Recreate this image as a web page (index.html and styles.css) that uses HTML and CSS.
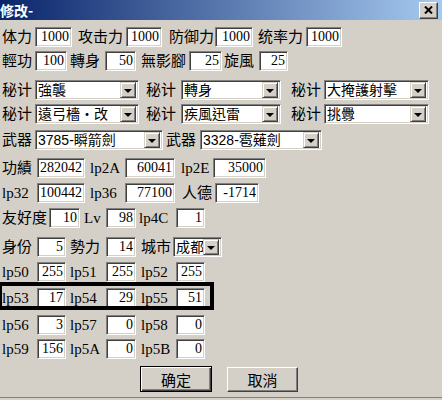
FILE: index.html
```html
<!DOCTYPE html>
<html lang="zh-Hant">
<head>
<meta charset="utf-8">
<title>修改</title>
<link rel="stylesheet" href="styles.css">
</head>
<body>
<div class="dialog">
  <div class="titlebar">
    <span class="title">修改-</span>
    <span class="close"><svg width="9" height="8" viewBox="0 0 9 8"><path d="M1 0.5 L8 7.5 M8 0.5 L1 7.5" stroke="#000" stroke-width="2"/></svg></span>
  </div>
  <div class="content">
    <div class="row">
      <span class="lab m2 w33">体力</span><input class="field i37" value="1000" readonly>
      <span class="lab m6 w48">攻击力</span><input class="field i36" value="1000" readonly>
      <span class="lab m7 w46">防御力</span><input class="field i38" value="1000" readonly>
      <span class="lab m5 w48">统率力</span><input class="field i36" value="1000" readonly>
    </div>
    <div class="row">
      <span class="lab m2 w33">輕功</span><input class="field i32" value="100" readonly>
      <span class="lab m3 w35">轉身</span><input class="field i31" value="50" readonly>
      <span class="lab m5 w48">無影腳</span><input class="field i33" value="25" readonly>
      <span class="lab m2 w35">旋風</span><input class="field i29" value="25" readonly>
    </div>
    <div class="row">
      <span class="lab m2 w33">秘计</span><div class="combo c104"><span class="ctext">強襲</span><span class="cbtn"></span></div>
      <span class="lab m7 w35">秘计</span><div class="combo c100"><span class="ctext">轉身</span><span class="cbtn"></span></div>
      <span class="lab m10 w33">秘计</span><div class="combo c105"><span class="ctext">大掩護射擊</span><span class="cbtn"></span></div>
    </div>
    <div class="row">
      <span class="lab m2 w33">秘计</span><div class="combo c104"><span class="ctext">遠弓檣・改</span><span class="cbtn"></span></div>
      <span class="lab m7 w35">秘计</span><div class="combo c100"><span class="ctext">疾風迅雷</span><span class="cbtn"></span></div>
      <span class="lab m10 w33">秘计</span><div class="combo c105"><span class="ctext">挑釁</span><span class="cbtn"></span></div>
    </div>
    <div class="row">
      <span class="lab m2 w33">武器</span><div class="combo c128"><span class="ctext">3785-瞬箭劍</span><span class="cbtn"></span></div>
      <span class="lab m3 w34">武器</span><div class="combo c122"><span class="ctext">3328-雹薙劍</span><span class="cbtn"></span></div>
    </div>
    <div class="row">
      <span class="lab m2 w35">功績</span><input class="field i48" value="282042" readonly>
      <span class="lab m5 w35">lp2A</span><input class="field i50" value="60041" readonly>
      <span class="lab m6 w32">lp2E</span><input class="field i53" value="35000" readonly>
    </div>
    <div class="row">
      <span class="lab m2 w35">lp32</span><input class="field i48" value="100442" readonly>
      <span class="lab m5 w35">lp36</span><input class="field i50" value="77100" readonly>
      <span class="lab m7 w33">人德</span><input class="field i44" value="-1714" readonly>
    </div>
    <div class="row">
      <span class="lab m2 w47">友好度</span><input class="field i31" value="10" readonly>
      <span class="lab m4 w22">Lv</span><input class="field i30" value="98" readonly>
      <span class="lab m3 w37">lp4C</span><input class="field i29" value="1" readonly>
    </div>
    <div class="row">
      <span class="lab m2 w35">身份</span><input class="field i29" value="5" readonly>
      <span class="lab m4 w36">勢力</span><input class="field i30" value="14" readonly>
      <span class="lab m5 w32">城市</span><div class="combo c49"><span class="ctext">成都</span><span class="cbtn"></span></div>
    </div>
    <div class="row">
      <span class="lab m2 w35">lp50</span><input class="field i29" value="255" readonly>
      <span class="lab m4 w36">lp51</span><input class="field i30" value="255" readonly>
      <span class="lab m5 w35">lp52</span><input class="field i29" value="255" readonly>
    </div>
    <div class="row">
      <span class="lab m2 w35">lp53</span><input class="field i29" value="17" readonly>
      <span class="lab m4 w36">lp54</span><input class="field i30" value="29" readonly>
      <span class="lab m5 w35">lp55</span><input class="field i29" value="51" readonly>
    </div>
    <div class="row">
      <span class="lab m2 w35">lp56</span><input class="field i29" value="3" readonly>
      <span class="lab m4 w36">lp57</span><input class="field i30" value="0" readonly>
      <span class="lab m5 w35">lp58</span><input class="field i29" value="0" readonly>
    </div>
    <div class="row">
      <span class="lab m2 w35">lp59</span><input class="field i29" value="156" readonly>
      <span class="lab m4 w36">lp5A</span><input class="field i30" value="0" readonly>
      <span class="lab m5 w35">lp5B</span><input class="field i29" value="0" readonly>
    </div>
    <div class="actions">
      <button class="btn btn-default">确定</button>
      <button class="btn btn-cancel">取消</button>
    </div>
  </div>
  <div class="mark"></div>
</div>
</body>
</html>
```

FILE: styles.css
```css
html, body {
  margin: 0;
  padding: 0;
}
body {
  width: 442px;
  height: 400px;
  overflow: hidden;
  background: #d4d0c8;
}
.dialog {
  position: relative;
  height: 398px;
  box-sizing: border-box;
  border-bottom: 1px solid #808080;
  background: #d4d0c8;
}
.titlebar {
  height: 20px;
  display: flex;
  align-items: center;
  justify-content: space-between;
  padding-right: 4px;
  background: linear-gradient(to right, #0a246a, #a6caf0);
}
.title {
  color: #fff;
  font: bold 14px "Noto Sans CJK TC", sans-serif;
  line-height: 20px;
  white-space: nowrap;
}
.close {
  width: 19px;
  height: 17px;
  box-sizing: border-box;
  background: #d4d0c8;
  border: 1px solid;
  border-color: #fff #404040 #404040 #fff;
  box-shadow: inset -1px -1px 0 #808080;
  display: flex;
  align-items: center;
  justify-content: center;
}
.content {
  padding-top: 7px;
  display: grid;
  grid-template-rows: 24px 29px 24px 26px 28px 25px 25px 29px 25px 26px 27px 24px 27px 26px;
  font: 15px "Liberation Serif", "Noto Sans CJK TC", serif;
  color: #000;
}
.row {
  display: flex;
  align-items: flex-start;
}
.lab {
  flex: none;
  height: 20px;
  line-height: 20px;
  white-space: nowrap;
}
.field {
  flex: none;
  box-sizing: border-box;
  height: 20px;
  margin: 0;
  padding: 0 2px 0 0;
  border: 1px solid;
  border-color: #808080 #fff #fff #808080;
  box-shadow: inset 1px 1px 0 #404040, inset -1px -1px 0 #d4d0c8;
  background: #fff;
  font: 14px "Liberation Serif", serif;
  color: #000;
  text-align: right;
  outline: none;
}
.combo {
  flex: none;
  box-sizing: border-box;
  height: 20px;
  padding: 2px;
  border: 1px solid;
  border-color: #808080 #fff #fff #808080;
  box-shadow: inset 1px 1px 0 #404040, inset -1px -1px 0 #d4d0c8;
  background: #fff;
  display: flex;
  align-items: center;
  justify-content: space-between;
  font: 14px "Liberation Sans", "Noto Sans CJK TC", sans-serif;
  overflow: hidden;
}
.ctext {
  line-height: 16px;
  white-space: nowrap;
  overflow: hidden;
}
.cbtn {
  flex: none;
  width: 16px;
  height: 16px;
  box-sizing: border-box;
  background: #d4d0c8;
  border: 1px solid;
  border-color: #d4d0c8 #404040 #404040 #d4d0c8;
  box-shadow: inset 1px 1px 0 #fff, inset -1px -1px 0 #808080;
  display: flex;
  align-items: center;
  justify-content: center;
}
.cbtn::before {
  content: "";
  width: 0;
  height: 0;
  border-top: 4px solid #000;
  border-left: 4px solid transparent;
  border-right: 4px solid transparent;
  margin-top: 1px;
}
.actions {
  display: flex;
  align-items: flex-start;
  gap: 15px;
  padding-left: 140px;
}
.btn {
  box-sizing: border-box;
  height: 26px;
  margin: 0;
  padding: 0;
  background: #d4d0c8;
  border: 1px solid;
  border-color: #fff #404040 #404040 #fff;
  box-shadow: inset -1px -1px 0 #808080;
  font: 15px "Noto Sans CJK TC", sans-serif;
  color: #000;
  display: flex;
  align-items: center;
  justify-content: center;
}
.btn-default {
  width: 72px;
  border-color: #000;
  box-shadow: inset 1px 1px 0 #fff, inset -1px -1px 0 #404040, inset -2px -2px 0 #808080;
}
.btn-cancel {
  width: 71px;
  margin-top: 1px;
  height: 25px;
}
.mark {
  position: absolute;
  left: -2px;
  top: 282px;
  width: 216px;
  height: 28px;
  box-sizing: border-box;
  border: 4px solid #000;
}

/* label spacing */
.m2 { margin-left: 2px; }
.m3 { margin-left: 3px; }
.m4 { margin-left: 4px; }
.m5 { margin-left: 5px; }
.m6 { margin-left: 6px; }
.m7 { margin-left: 7px; }
.m10 { margin-left: 10px; }

/* label widths */
.w22 { width: 22px; }
.w32 { width: 32px; }
.w33 { width: 33px; }
.w34 { width: 34px; }
.w35 { width: 35px; }
.w36 { width: 36px; }
.w37 { width: 37px; }
.w46 { width: 46px; }
.w47 { width: 47px; }
.w48 { width: 48px; }

/* field widths */
.i29 { width: 29px; }
.i30 { width: 30px; }
.i31 { width: 31px; }
.i32 { width: 32px; }
.i33 { width: 33px; }
.i36 { width: 36px; }
.i37 { width: 37px; }
.i38 { width: 38px; }
.i44 { width: 44px; }
.i48 { width: 48px; }
.i50 { width: 50px; }
.i53 { width: 53px; }

/* combo widths */
.c49 { width: 49px; }
.c100 { width: 100px; }
.c104 { width: 104px; }
.c105 { width: 105px; }
.c122 { width: 122px; }
.c128 { width: 128px; }
```
